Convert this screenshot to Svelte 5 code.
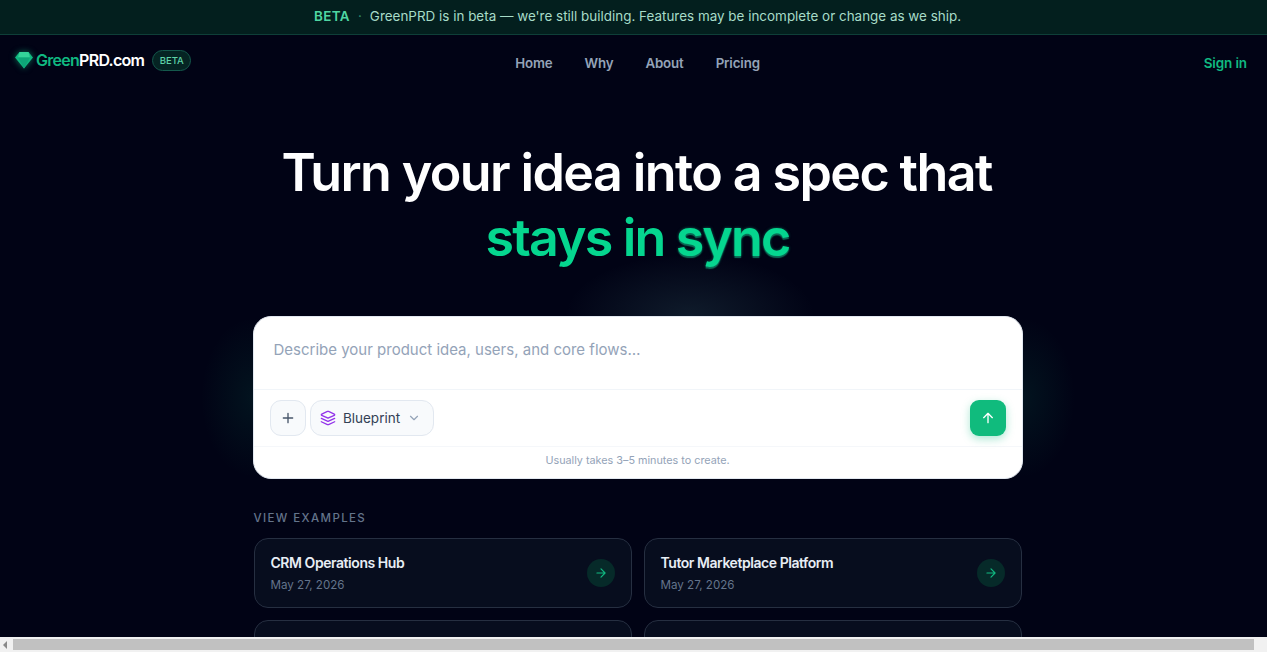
<script>
	// only the first row is readable above the fold, the next cards are cut by the window
	const examples = [
		{ title: 'CRM Operations Hub', date: 'May 27, 2026' },
		{ title: 'Tutor Marketplace Platform', date: 'May 27, 2026' },
		null,
		null
	];
	const links = ['Home', 'Why', 'About', 'Pricing'];
</script>

<div class="page">
	<div class="banner">
		<strong>BETA</strong>
		<span class="dot">·</span>
		<span>GreenPRD is in beta — we're still building. Features may be incomplete or change as we ship.</span>
	</div>

	<header>
		<div class="brand">
			<svg class="gem" width="20" height="20" viewBox="0 0 20 20">
				<path d="M5.5 2h9L19 7.500 10 18.500 1 7.500z" fill="#10b981" />
				<path d="M5.500 2h9L16 7.500H4z" fill="#34d399" />
				<path d="M4 7.500h12L10 18.500z" fill="#0ea678" />
			</svg>
			<span class="name"><span class="green">Green</span>PRD.com</span>
			<span class="pill">BETA</span>
		</div>
		<nav>
			{#each links as link}
				<a href="#top">{link}</a>
			{/each}
		</nav>
		<a class="signin" href="#top">Sign in</a>
	</header>

	<main>
		<h1>Turn your idea into a spec that<br /><span class="accent">stays in <span class="glow">sync</span></span></h1>

		<div class="composer-wrap">
			<div class="halo"></div>
			<div class="composer">
				<div class="prompt">Describe your product idea, users, and core flows…</div>
				<div class="tools">
					<button class="square" aria-label="Add">
						<svg width="16" height="16" viewBox="0 0 24 24" fill="none" stroke="#475569" stroke-width="2" stroke-linecap="round"><path d="M12 5v14M5 12h14" /></svg>
					</button>
					<button class="mode">
						<svg width="16" height="16" viewBox="0 0 24 24" fill="none" stroke="#9333ea" stroke-width="2" stroke-linecap="round" stroke-linejoin="round">
							<path d="M12.830 2.180a2 2 0 0 0-1.660 0L2.600 6.080a1 1 0 0 0 0 1.830l8.580 3.910a2 2 0 0 0 1.660 0l8.580-3.900a1 1 0 0 0 0-1.830Z" />
							<path d="m22 17.650-9.170 4.160a2 2 0 0 1-1.660 0L2 17.650" />
							<path d="m22 12.650-9.170 4.160a2 2 0 0 1-1.660 0L2 12.650" />
						</svg>
						<span>Blueprint</span>
						<svg width="14" height="14" viewBox="0 0 24 24" fill="none" stroke="#94a3b8" stroke-width="2" stroke-linecap="round" stroke-linejoin="round"><path d="m6 9 6 6 6-6" /></svg>
					</button>
					<button class="send" aria-label="Send">
						<svg width="16" height="16" viewBox="0 0 24 24" fill="none" stroke="#fff" stroke-width="2" stroke-linecap="round" stroke-linejoin="round"><path d="M12 19V5M5.500 11.500 12 5l6.500 6.500" /></svg>
					</button>
				</div>
				<div class="hint">Usually takes 3–5 minutes to create.</div>
			</div>
		</div>

		<div class="examples">
			<div class="label">VIEW EXAMPLES</div>
			<div class="grid">
				{#each examples as ex}
					<div class="card">
						{#if ex}
							<div>
								<div class="title">{ex.title}</div>
								<div class="date">{ex.date}</div>
							</div>
							<span class="go">
								<svg width="14" height="14" viewBox="0 0 24 24" fill="none" stroke="#10b981" stroke-width="2" stroke-linecap="round" stroke-linejoin="round"><path d="M5 12h14M12 5l7 7-7 7" /></svg>
							</span>
						{/if}
					</div>
				{/each}
			</div>
		</div>
	</main>

	<div class="scrollbar">
		<span class="arrow"></span>
		<span class="thumb"></span>
	</div>
</div>

<style>
	:global(body) {
		margin: 0;
		background: #010315;
		overflow: hidden;
	}

	/* the reference page is a little wider than its window */
	.page {
		width: 1275px;
		height: 100vh;
		overflow: hidden;
		position: relative;
		background: #010315;
		font-family: Inter, 'Noto Sans', sans-serif;
		color: #fff;
	}

	.banner {
		height: 35px;
		box-sizing: border-box;
		padding-bottom: 2px;
		display: flex;
		align-items: center;
		justify-content: center;
		gap: 7px;
		background: #031f1e;
		border-bottom: 1px solid #0e3f38;
		font-size: 13.450px;
		color: #a7dcc8;
	}

	.banner strong {
		color: #4fd6a2;
		font-weight: 600;
		letter-spacing: 0.03em;
		margin-right: 1px;
	}

	.dot {
		color: #2f8a6c;
		margin-right: 1px;
	}

	header {
		height: 56px;
		display: grid;
		grid-template-columns: 1fr auto 1fr;
		align-items: center;
		padding: 0 14px;
	}

	.brand {
		display: flex;
		align-items: center;
		margin-top: -6px;
	}

	.gem {
		filter: drop-shadow(0 0 3px rgba(16, 185, 129, 0.6));
		margin-right: 2px;
	}

	.name {
		font-size: 16px;
		font-weight: 600;
		letter-spacing: -0.045em;
	}

	.green {
		color: #10b981;
	}

	.pill {
		margin-left: 8px;
		height: 19px;
		padding: 0 6.500px;
		display: flex;
		align-items: center;
		border: 1px solid #14594c;
		border-radius: 11px;
		background: #052423;
		font-size: 9.500px;
		font-weight: 500;
		color: #5fd3a8;
	}

	nav {
		display: flex;
		gap: 32px;
	}

	nav a {
		font-size: 13.300px;
		font-weight: 600;
		color: #94a3b8;
		text-decoration: none;
		letter-spacing: -0.01em;
	}

	.signin {
		justify-self: end;
		margin-right: 14px;
		font-size: 13.500px;
		font-weight: 600;
		color: #10b981;
		text-decoration: none;
		letter-spacing: -0.01em;
	}

	main {
		width: 770px;
		margin: 0 auto;
	}

	h1 {
		margin: 49px 0 0;
		padding-right: 2px;
		text-align: center;
		font-size: 52px;
		line-height: 65px;
		font-weight: 600;
		letter-spacing: -0.031em;
	}

	.accent {
		display: inline-block;
		margin-left: 2px;
		color: #05d68f;
		letter-spacing: -0.036em;
	}

	.glow {
		text-shadow: 0 2px 1px rgba(12, 130, 100, 0.8), 0 0 3px rgba(16, 185, 129, 0.6);
	}

	.composer-wrap {
		position: relative;
		margin-top: 46px;
	}

	.halo {
		position: absolute;
		inset: -60px;
		background:
			radial-gradient(ellipse 125px 62px at 497px 60px, rgba(110, 190, 190, 0.13), transparent),
			radial-gradient(ellipse 52px 80px at 60px 50%, rgba(16, 185, 129, 0.09), transparent),
			radial-gradient(ellipse 52px 80px at calc(100% - 60px) 50%, rgba(16, 185, 129, 0.09), transparent);
	}

	.composer {
		position: relative;
		background: #fff;
		border: 1px solid #e2e8f0;
		border-radius: 18px;
		height: 161px;
		display: flex;
		flex-direction: column;
	}

	.prompt {
		height: 73px;
		padding: 23px 20px 0;
		box-sizing: border-box;
		font-size: 15px;
		color: #94a3b8;
		border-bottom: 1px solid #f1f5f9;
	}

	.tools {
		height: 57px;
		box-sizing: border-box;
		display: flex;
		align-items: center;
		gap: 4px;
		padding: 0 16px;
		border-bottom: 1px solid #f5f7fa;
	}

	button {
		font-family: inherit;
		padding: 0;
		display: flex;
		align-items: center;
		justify-content: center;
		cursor: pointer;
	}

	.square {
		width: 36px;
		height: 36px;
		border: 1px solid #e2e8f0;
		border-radius: 11px;
		background: #f8fafc;
	}

	.mode {
		height: 36px;
		width: 124px;
		padding-right: 2px;
		gap: 7px;
		border: 1px solid #e2e8f0;
		border-radius: 12px;
		background: #f8fafc;
		font-size: 13.500px;
		color: #334155;
	}

	.send {
		margin-left: auto;
		width: 36px;
		height: 36px;
		border: none;
		border-radius: 9px;
		background: #10bb7d;
		box-shadow: 0 3px 8px rgba(16, 185, 129, 0.35);
	}

	.hint {
		flex: 1;
		display: flex;
		align-items: center;
		justify-content: center;
		padding-bottom: 4px;
		font-size: 10.800px;
		color: #94a3b8;
	}

	.examples {
		position: relative;
		margin-top: 31px;
	}

	.label {
		margin-left: 1px;
		font-size: 11.500px;
		line-height: 16px;
		font-weight: 500;
		letter-spacing: 0.12em;
		color: #64748b;
	}

	.grid {
		display: grid;
		grid-template-columns: 378px 378px;
		gap: 12px;
		margin: 12px 0 0 1px;
	}

	.card {
		height: 70px;
		box-sizing: border-box;
		display: flex;
		align-items: center;
		justify-content: space-between;
		padding: 0 16px;
		border: 1px solid #262f41;
		border-radius: 14px;
		background: #070d1e;
	}

	.title {
		font-size: 14px;
		line-height: 20px;
		font-weight: 600;
		letter-spacing: -0.032em;
		color: #e8edf5;
	}

	.date {
		margin-top: 3px;
		font-size: 11.600px;
		line-height: 18px;
		color: #64748b;
	}

	.go {
		width: 28px;
		height: 28px;
		border-radius: 50%;
		background: #062a29;
		display: flex;
		align-items: center;
		justify-content: center;
	}

	.scrollbar {
		position: fixed;
		left: 0;
		right: 0;
		bottom: 0;
		height: 15px;
		background: #f1f1f1;
		display: flex;
		align-items: center;
		gap: 6px;
	}

	.arrow {
		width: 0;
		height: 0;
		margin-left: 3px;
		border-top: 4px solid transparent;
		border-bottom: 4px solid transparent;
		border-right: 4px solid #8a8a8a;
	}

	.thumb {
		width: 1241px;
		height: 11px;
		background: #c1c1c1;
	}
</style>
